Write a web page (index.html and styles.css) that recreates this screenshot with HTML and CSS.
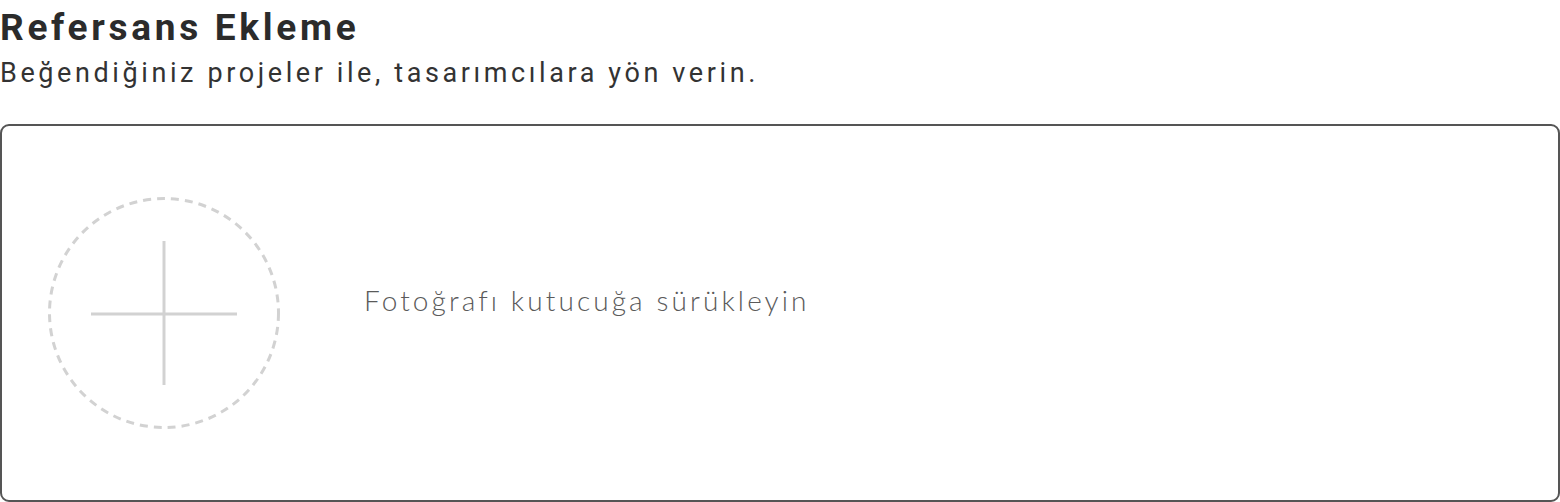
FILE: index.html
```html
<!DOCTYPE html>
<html lang="tr">
<head>
<meta charset="utf-8">
<link rel="stylesheet" href="styles.css">
</head>
<body>
<section class="ref">
  <h1 class="ref-title">Refersans Ekleme</h1>
  <p class="ref-sub">Beğendiğiniz projeler ile, tasarımcılara yön verin.</p>
  <div class="drop">
    <div class="drop-icon">
      <svg width="232" height="232" viewBox="0 0 232 232">
        <circle cx="116" cy="116" r="114.5" fill="none" stroke="#d2d2d2" stroke-width="3" stroke-dasharray="8 6"/>
        <line x1="43" y1="117" x2="189" y2="117" stroke="#d2d2d2" stroke-width="3"/>
        <line x1="116" y1="44" x2="116" y2="188" stroke="#d2d2d2" stroke-width="3"/>
      </svg>
    </div>
    <span class="drop-text">Fotoğrafı kutucuğa sürükleyin</span>
  </div>
</section>
</body>
</html>
```

FILE: styles.css
```css
html, body {
  margin: 0;
  padding: 0;
  background: #fff;
}
.ref {
  font-family: Roboto, "Liberation Sans", sans-serif;
  color: #2b2b2b;
}
.ref-title {
  margin: 0;
  padding-top: 6px;
  font-size: 37px;
  font-weight: 700;
  letter-spacing: 3.7px;
  line-height: 44px;
}
.ref-sub {
  margin: 5px 0 0;
  font-size: 27px;
  font-weight: 400;
  letter-spacing: 3.6px;
  line-height: 36px;
  color: #333;
}
.drop {
  margin-top: 33px;
  box-sizing: border-box;
  height: 378px;
  border: 2px solid #555;
  border-radius: 9px;
  display: flex;
  align-items: center;
  padding-left: 46px;
}
.drop-icon {
  width: 232px;
  height: 232px;
  flex: none;
}
.drop-icon svg { display: block; }
.drop-text {
  margin-left: 84px;
  margin-bottom: 27px;
  font-family: Lato, sans-serif;
  font-weight: 300;
  font-size: 28px;
  letter-spacing: 3.1px;
  color: #5a5a5a;
}
```
